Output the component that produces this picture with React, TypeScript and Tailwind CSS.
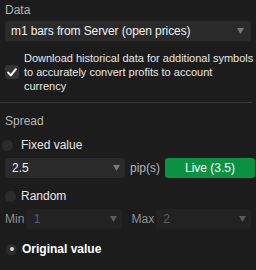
import React from "react";

const Arrow = ({ dim = false }: { dim?: boolean }) => (
  <svg width="7" height="6" viewBox="0 0 7 6" className="shrink-0">
    <path d="M0 0 H7 L3.5 6 Z" fill={dim ? "#5a5a5a" : "#7a7a7a"} />
  </svg>
);

export default function App() {
  return (
    <div
      className="w-[256px] h-[270px] bg-[#1c1c1c] text-[12px] overflow-hidden relative"
      style={{ fontFamily: '"Liberation Sans", Arial, sans-serif' }}
    >
      <div className="px-[5px] pt-[2px]">
        <div className="text-[#b4b4b4] leading-[14px] h-[14px] mt-[1px]">Data</div>
        <div className="mt-[4px] h-[20px] rounded-[3px] bg-[#2a2a2a] flex items-center justify-between pl-[6px] pr-[7px] text-[#f0f0f0] tracking-[-0.1px]">
          <span>m1 bars from Server (open prices)</span>
          <Arrow />
        </div>
        <div className="mt-[10px] flex items-center gap-[5px]">
          <div className="w-[14px] h-[14px] rounded-[3px] bg-[#333] flex items-center justify-center shrink-0">
            <svg width="10" height="9" viewBox="0 0 10 9">
              <path d="M1.2 4.6 L3.8 7.4 L8.8 1.2" stroke="#fff" strokeWidth="2" fill="none" strokeLinecap="round" strokeLinejoin="round" />
            </svg>
          </div>
          <div className="text-[#e8e8e8] leading-[14px] text-[11px] whitespace-nowrap flex flex-col">
            <span>Download historical data for additional symbols</span>
            <span>to accurately convert profits to account</span>
            <span>currency</span>
          </div>
        </div>
      </div>
      <div className="mt-[9px] h-px bg-[#3a3a3a] w-[252px]"></div>
      <div className="px-[5px]">
        <div className="mt-[11px] text-[#b4b4b4] leading-[14px]">Spread</div>
        <div className="mt-[10px] flex items-center gap-[8px] -ml-[3px]">
          <div className="w-[11px] h-[11px] rounded-full bg-[#2c2c2c]"></div>
          <span className="text-[#e8e8e8] leading-[14px]">Fixed value</span>
        </div>
        <div className="mt-[6px] flex items-center h-[20px] -mr-[4px]">
          <div className="w-[120px] shrink-0 h-[20px] rounded-[3px] bg-[#2a2a2a] flex items-center justify-between pl-[7px] pr-[5px] text-[#f0f0f0]">
            <span>2.5</span>
            <Arrow />
          </div>
          <span className="ml-[5px] text-[#b4b4b4]">pip(s)</span>
          <div className="ml-[5px] flex-1 h-[20px] rounded-[3px] bg-[#0b9142] flex items-center justify-center text-white">
            Live (3.5)
          </div>
        </div>
        <div className="mt-[11px] flex items-center gap-[5px]">
          <div className="w-[11px] h-[11px] rounded-full bg-[#2c2c2c]"></div>
          <span className="text-[#e8e8e8] leading-[14px]">Random</span>
        </div>
        <div className="mt-[6px] flex items-center h-[20px]">
          <span className="text-[#909090] w-[21px]">Min</span>
          <div className="w-[97px] h-[20px] rounded-[3px] bg-[#222222] flex items-center justify-between pl-[8px] pr-[5px] text-[#5e5e5e]">
            <span>1</span>
            <Arrow dim />
          </div>
          <span className="ml-[10px] text-[#909090] w-[25px]">Max</span>
          <div className="w-[96px] h-[20px] rounded-[3px] bg-[#222222] flex items-center justify-between pl-[7px] pr-[5px] text-[#5e5e5e]">
            <span>2</span>
            <Arrow dim />
          </div>
        </div>
        <div className="mt-[13px] flex items-center gap-[5px] ml-[1px]">
          <div className="w-[11px] h-[11px] rounded-full bg-[#2c2c2c] flex items-center justify-center">
            <div className="w-[4px] h-[4px] rounded-full bg-[#d8d8d8]"></div>
          </div>
          <span className="text-white font-bold leading-[14px]">Original value</span>
        </div>
      </div>
    </div>
  );
}
